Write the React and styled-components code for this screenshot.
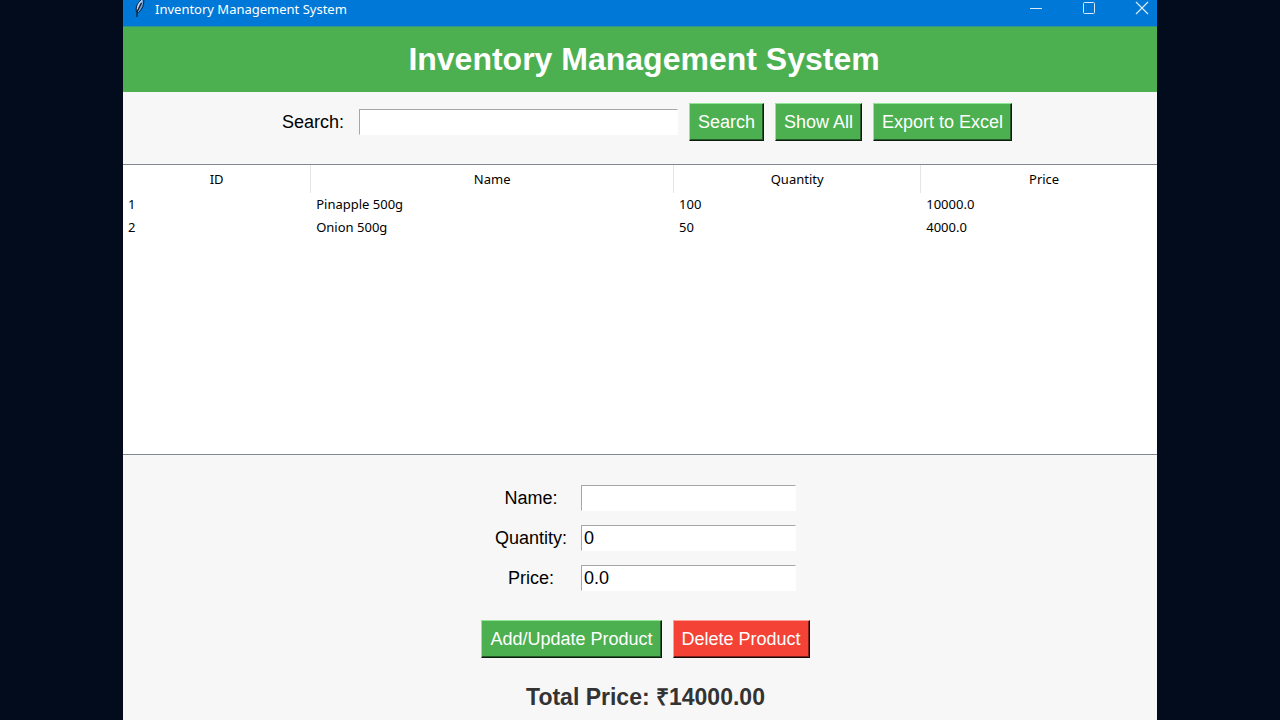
import React from "react";
import styled, { createGlobalStyle } from "styled-components";

const GlobalStyle = createGlobalStyle`
  * { box-sizing: border-box; }
  body {
    margin: 0;
    background: #030c1c;
    font-family: "Liberation Sans", Arial, sans-serif;
    font-size: 18px;
    color: #000;
  }
`;

const Desktop = styled.div`
  display: flex;
  flex-direction: column;
  min-height: 100vh;
  padding: 0 123px;
`;

const Window = styled.main`
  display: flex;
  flex-direction: column;
  flex: 1;
  background: #f7f7f7;
`;

const TitleBar = styled.header`
  display: flex;
  align-items: center;
  height: 26px;
  padding: 0 8px 8px 9px;
  background: #0078d7;
  color: #fff;
  font-family: "Noto Sans", "Open Sans", sans-serif;
  font-size: 13px;
`;

const WindowName = styled.span`
  flex: 1;
  margin-left: 7px;
  line-height: 18px;
`;

const WindowControls = styled.div`
  display: flex;
  gap: 39px;
`;

const ControlButton = styled.button`
  display: flex;
  padding: 0 0 2px;
  border: 0;
  background: none;
  color: #d9ebfa;
`;

const Banner = styled.h1`
  margin: 0;
  padding: 12px 0 13px 8px;
  background: #4caf50;
  border-top: 1px solid #2f9a8a;
  color: #fff;
  font-size: 32px;
  line-height: 40px;
  text-align: center;
`;

const Toolbar = styled.form`
  display: flex;
  justify-content: center;
  align-items: center;
  gap: 11px;
  padding: 11px 0 23px 14px;
`;

const SearchLabel = styled.label`
  margin-right: 4px;
`;

const Entry = styled.input`
  width: ${(p) => p.$width}px;
  height: 26px;
  padding: 0 2px;
  border: 1px solid #fff;
  border-top-color: #a6a6a6;
  border-left-color: #a6a6a6;
  background: #fff;
  color: #000;
  font: inherit;
  outline: none;
`;

const Button = styled.button`
  height: 38px;
  padding: 0 8px;
  border: 1px solid;
  border-color: ${(p) => (p.$danger ? "#ffa098 #1c0705 #1c0705 #ffa098" : "#8fe693 #0c1f0d #0c1f0d #8fe693")};
  box-shadow: inset -1px -1px 0 ${(p) => (p.$danger ? "#7c211b" : "#26592a")};
  background: ${(p) => (p.$danger ? "#f44336" : "#4caf50")};
  color: #fff;
  font: inherit;
  white-space: nowrap;
`;

const TableArea = styled.section`
  min-height: 291px;
  background: #fff;
  border-top: 1px solid #828790;
  border-bottom: 1px solid #828790;
`;

const Table = styled.table`
  width: 100%;
  table-layout: fixed;
  border-collapse: separate;
  border-spacing: 0;
  font-family: "Noto Sans", "Open Sans", sans-serif;
  font-size: 13px;
`;

const Column = styled.col`
  width: ${(p) => p.$share}%;
`;

const HeadCell = styled.th`
  height: 28px;
  padding: 0;
  border-right: 1px solid #e5e5e5;
  font-weight: 400;

  &:last-child {
    padding-left: 10px;
    border-right: 0;
  }
`;

const Cell = styled.td`
  height: 23px;
  padding: 0 5px 2px;
`;

const ProductForm = styled.form`
  display: flex;
  flex-direction: column;
  align-items: center;
  padding: 30px 0 8px 11px;
`;

const Fields = styled.div`
  display: grid;
  grid-template-columns: auto auto;
  column-gap: 14px;
  row-gap: 14px;
  align-items: center;
  justify-items: center;
`;

const Actions = styled.div`
  display: flex;
  gap: 11px;
  margin: 29px 0 24px;
`;

const Total = styled.output`
  color: #333;
  font-size: 23px;
  font-weight: 700;
  line-height: 30px;
`;

const Feather = () => (
  <svg width="16" height="18" viewBox="0 0 16 18" aria-hidden="true">
    <path d="M4.5 12C3 7 6 1 11.5 -1C12.5 4 10.5 9 6.5 12.5Z" fill="#6f9fd8" stroke="#101c2c" strokeWidth="1" />
    <path d="M5.5 9C6 5 8 2 10 0.5" fill="none" stroke="#c9def5" strokeWidth="1.2" />
    <path d="M4.8 17L5.2 11.5L9.5 3" fill="none" stroke="#101c2c" strokeWidth="1.2" />
  </svg>
);

const products = [
  [1, "Pinapple 500g", "100", "10000.0"],
  [2, "Onion 500g", "50", "4000.0"],
];

const fields = [
  { id: "name", label: "Name:", value: "" },
  { id: "quantity", label: "Quantity:", value: "0" },
  { id: "price", label: "Price:", value: "0.0" },
];

export default function App() {
  return (
    <Desktop>
      <GlobalStyle />
      <Window>
        <TitleBar>
          <Feather />
          <WindowName>Inventory Management System</WindowName>
          <WindowControls>
            <ControlButton aria-label="Minimize">
              <svg width="14" height="14" viewBox="0 0 14 14"><path d="M1 7.5H13" stroke="currentColor" /></svg>
            </ControlButton>
            <ControlButton aria-label="Maximize">
              <svg width="14" height="14" viewBox="0 0 14 14"><rect x="1.5" y="1.5" width="11" height="11" rx="1" fill="none" stroke="currentColor" /></svg>
            </ControlButton>
            <ControlButton aria-label="Close">
              <svg width="14" height="14" viewBox="0 0 14 14"><path d="M1 1L13 13M13 1L1 13" stroke="currentColor" strokeWidth="1.2" /></svg>
            </ControlButton>
          </WindowControls>
        </TitleBar>
        <Banner>Inventory Management System</Banner>
        <Toolbar onSubmit={(e) => e.preventDefault()}>
          <SearchLabel htmlFor="search">Search:</SearchLabel>
          <Entry id="search" $width={319} />
          <Button type="submit">Search</Button>
          <Button type="button">Show All</Button>
          <Button type="button">Export to Excel</Button>
        </Toolbar>
        <TableArea>
          <Table>
            <colgroup>
              <Column $share={18.2} />
              <Column $share={35.1} />
              <Column $share={23.9} />
              <Column $share={22.8} />
            </colgroup>
            <thead>
              <tr>
                {["ID", "Name", "Quantity", "Price"].map((h) => (
                  <HeadCell key={h} scope="col">{h}</HeadCell>
                ))}
              </tr>
            </thead>
            <tbody>
              {products.map((row) => (
                <tr key={row[0]}>
                  {row.map((value, i) => (
                    <Cell key={i}>{value}</Cell>
                  ))}
                </tr>
              ))}
            </tbody>
          </Table>
        </TableArea>
        <ProductForm onSubmit={(e) => e.preventDefault()}>
          <Fields>
            {fields.map((f) => (
              <React.Fragment key={f.id}>
                <label htmlFor={f.id}>{f.label}</label>
                <Entry id={f.id} defaultValue={f.value} $width={215} />
              </React.Fragment>
            ))}
          </Fields>
          <Actions>
            <Button type="submit">Add/Update Product</Button>
            <Button type="button" $danger>Delete Product</Button>
          </Actions>
          <Total>Total Price: ₹14000.00</Total>
        </ProductForm>
      </Window>
    </Desktop>
  );
}
